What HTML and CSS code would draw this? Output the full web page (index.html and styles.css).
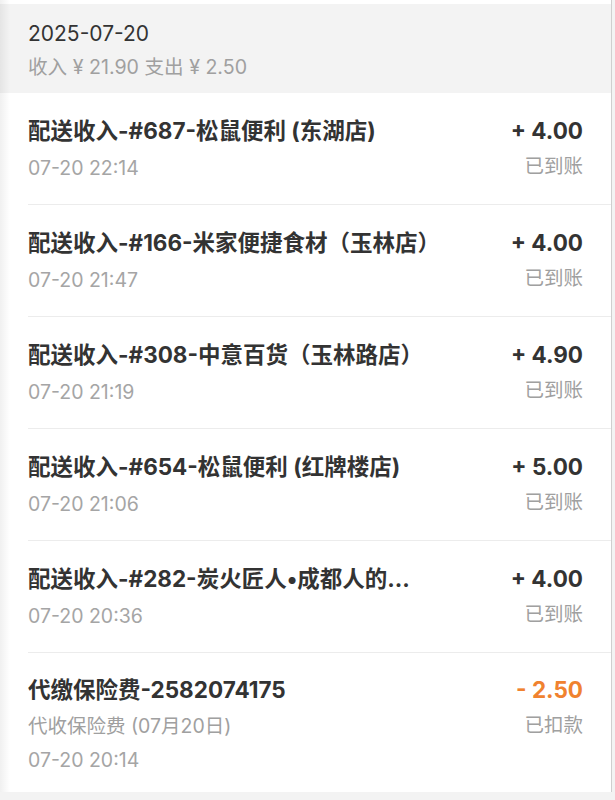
FILE: index.html
```html
<!DOCTYPE html>
<html lang="zh-CN">
<head>
    <meta charset="UTF-8">
    <meta name="viewport" content="width=device-width, initial-scale=1.0">
    <title>收支明细</title>
    <link rel="stylesheet" href="styles.css">
</head>
<body>
    <div class="page">
        <!-- 日期汇总 -->
        <div class="day-header">
            <div class="day-date">2025-07-20</div>
            <div class="day-sum">收入 ¥ 21.90 支出 ¥ 2.50</div>
        </div>

        <!-- 明细列表 -->
        <div class="list">
            <div class="item">
                <div class="item-main">
                    <div class="item-title">配送收入-#687-松鼠便利 (东湖店)</div>
                    <div class="item-time">07-20 22:14</div>
                </div>
                <div class="item-side">
                    <div class="amount">+ 4.00</div>
                    <div class="status">已到账</div>
                </div>
            </div>
            <div class="item">
                <div class="item-main">
                    <div class="item-title">配送收入-#166-米家便捷食材（玉林店）</div>
                    <div class="item-time">07-20 21:47</div>
                </div>
                <div class="item-side">
                    <div class="amount">+ 4.00</div>
                    <div class="status">已到账</div>
                </div>
            </div>
            <div class="item">
                <div class="item-main">
                    <div class="item-title">配送收入-#308-中意百货（玉林路店）</div>
                    <div class="item-time">07-20 21:19</div>
                </div>
                <div class="item-side">
                    <div class="amount">+ 4.90</div>
                    <div class="status">已到账</div>
                </div>
            </div>
            <div class="item">
                <div class="item-main">
                    <div class="item-title">配送收入-#654-松鼠便利 (红牌楼店)</div>
                    <div class="item-time">07-20 21:06</div>
                </div>
                <div class="item-side">
                    <div class="amount">+ 5.00</div>
                    <div class="status">已到账</div>
                </div>
            </div>
            <div class="item">
                <div class="item-main">
                    <div class="item-title">配送收入-#282-炭火匠人•成都人的...</div>
                    <div class="item-time">07-20 20:36</div>
                </div>
                <div class="item-side">
                    <div class="amount">+ 4.00</div>
                    <div class="status">已到账</div>
                </div>
            </div>
            <div class="item item-fee">
                <div class="item-main">
                    <div class="item-title">代缴保险费-2582074175</div>
                    <div class="item-desc">代收保险费 (07月20日)</div>
                    <div class="item-time">07-20 20:14</div>
                </div>
                <div class="item-side">
                    <div class="amount out">- 2.50</div>
                    <div class="status">已扣款</div>
                </div>
            </div>
        </div>
    </div>
</body>
</html>
```

FILE: styles.css
```css
html, body {
    height: 100%;
}
body {
    margin: 0;
    padding: 0;
    background-color: #f3f3f3;
    font-family: Inter, "Noto Sans CJK SC", sans-serif;
    color: #333;
}
.page {
    position: relative;
    margin-right: 3px;
    border-right: 1px solid #cfcfcf;
    background-color: #fff;
    padding-top: 4px;
}
/* 左侧阴影 */
.page::before {
    content: "";
    position: absolute;
    top: 0;
    left: 0;
    bottom: 0;
    width: 10px;
    background: linear-gradient(90deg, rgba(0, 0, 0, 0.06), rgba(0, 0, 0, 0));
    pointer-events: none;
}
.day-header {
    background-color: #f3f3f3;
    padding: 16px 28px 13px;
}
.day-date {
    font-size: 21px;
    line-height: 28px;
    color: #333;
}
.day-sum {
    margin-top: 6px;
    font-size: 19.6px;
    line-height: 26px;
    color: #a0a0a0;
}
.item {
    display: flex;
    justify-content: space-between;
    margin-left: 28px;
    padding: 23px 28px 22px 0;
    border-bottom: 1px solid #ececec;
}
.item-fee {
    padding-top: 22px;
    padding-bottom: 18px;
    border-bottom: none;
}
.item-title {
    font-size: 22.5px;
    line-height: 30px;
    font-weight: bold;
    color: #333;
    white-space: nowrap;
}
.item-desc {
    margin-top: 7px;
    font-size: 19.5px;
    line-height: 28px;
    color: #a0a0a0;
}
.item-time {
    margin-top: 8px;
    font-size: 19.5px;
    line-height: 28px;
    color: #a5a5a5;
}
.item-desc + .item-time {
    margin-top: 6px;
}
.item-side {
    text-align: right;
}
.amount {
    font-size: 22.5px;
    line-height: 30px;
    font-weight: bold;
    color: #333;
}
.amount.out {
    color: #f0822f;
}
.status {
    margin-top: 6px;
    font-size: 19.5px;
    line-height: 28px;
    color: #a0a0a0;
}
```
